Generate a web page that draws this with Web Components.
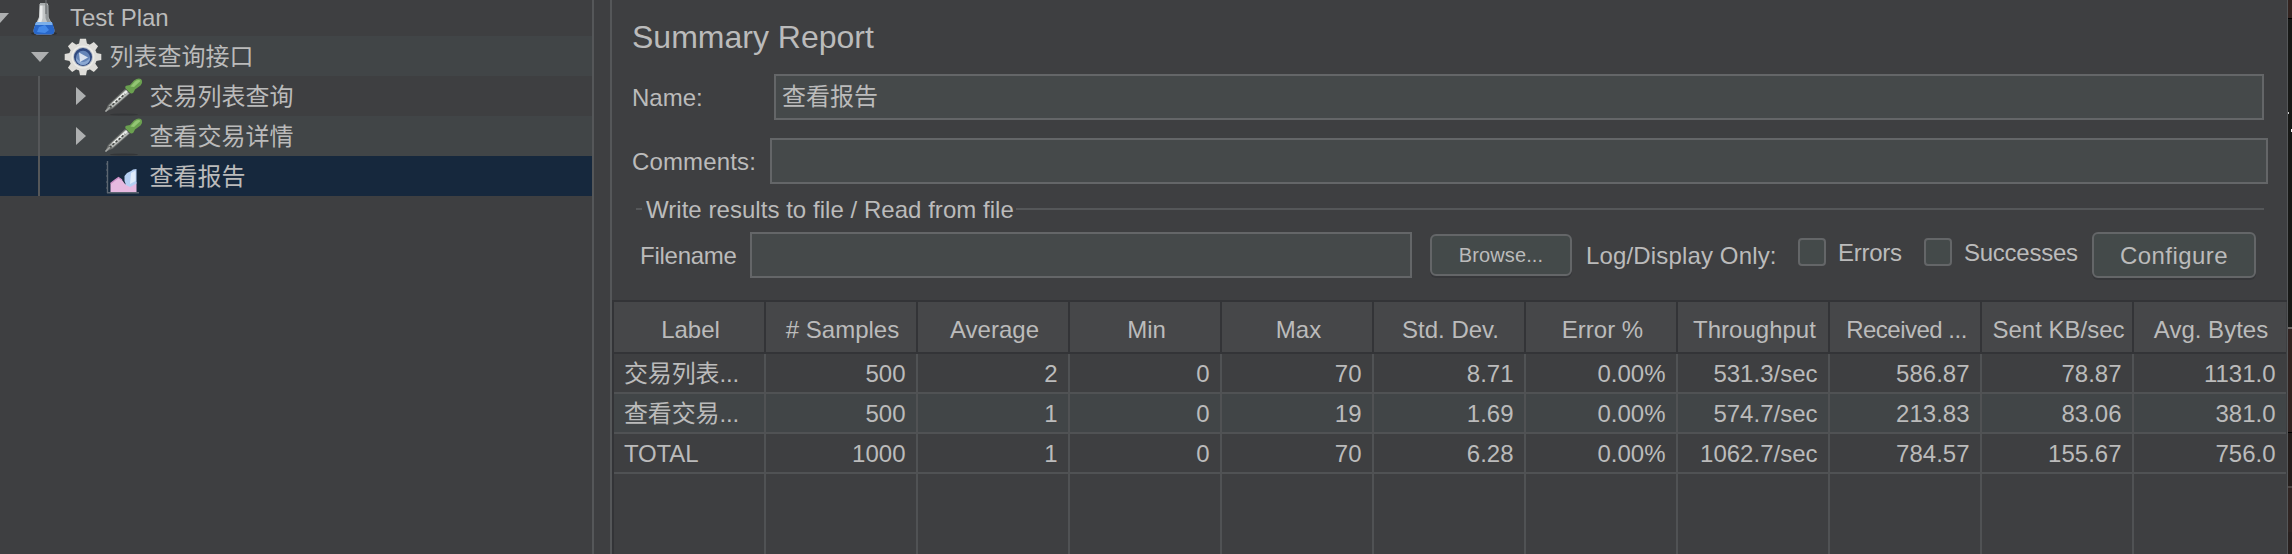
<!DOCTYPE html>
<html lang="zh">
<head>
<meta charset="utf-8">
<title>Summary Report</title>
<style>
body{margin:0;background:#3e3f41;color:#bbb;font:24px/40px "Liberation Sans","Noto Sans CJK SC",sans-serif;overflow:hidden}
</style>
</head>
<body>
<app-window>
  <tree-panel slot="tree">
    <tree-row level="0" icon="flask" state="open">Test Plan</tree-row>
    <tree-row level="1" icon="gear" state="open">列表查询接口</tree-row>
    <tree-row level="2" icon="pipette" state="closed">交易列表查询</tree-row>
    <tree-row level="2" icon="pipette" state="closed">查看交易详情</tree-row>
    <tree-row level="2" icon="chart" state="leaf" selected>查看报告</tree-row>
  </tree-panel>
  <report-panel></report-panel>
</app-window>
<script>
const define = (name, html) => customElements.define(name, class extends HTMLElement {
  connectedCallback() {
    if (this.shadowRoot) return;
    const t = document.createElement('template');
    t.innerHTML = typeof html === 'function' ? html(this) : html;
    this.attachShadow({mode: 'open'}).append(t.content.cloneNode(true));
  }
});

const icons = {
  flask: `<svg width="32" height="36" viewBox="0 0 32 36"><ellipse cx="16" cy="33.500" rx="13" ry="1.800" fill="#2b2d30"/><path d="M11.500 4L11 17 6 28Q4.500 34 9 34.500H23Q27.500 34 26 28L20.500 17 20 4Z" fill="#c2c5c6"/><path d="M12 5L11.500 18 8 27H12L14.500 18V5Z" fill="#e8eaea"/><path d="M17.500 5V18L21 27H25L20.500 18V5Z" fill="#93989a"/><path d="M7.500 23H24.500L26.500 30Q26.500 34.500 23 34.500H9Q5 34 5.500 30Z" fill="#2867ca"/><path d="M8 22H24L24.500 25H7Z" fill="#7db0ea"/><path d="M11 27L17 25 21 30 17 33 9 32Z" fill="#4489e8"/><rect x="12" y="3" width="7.500" height="2.500" fill="#a9adae"/><path d="M18 0V14" stroke="#6d7072" stroke-width="1.200"/></svg>`,
  gear: `<svg width="38" height="38" viewBox="-19 -19 38 38"><g fill="#deddd9">${[0,45,90,135,180,225,270,315].map(a=>`<path transform="rotate(${a})" d="M-4.200 -12L-3 -18.300H3L4.200 -12Z"/>`).join('')}<circle r="14"/></g><circle r="11.500" fill="#ecebe7"/><circle r="10" fill="#b9bfc9"/><circle r="9" fill="#30497f"/><circle cy="1" r="7.200" fill="#6585b8"/><path d="M-7 1A7 7 0 0 0 7 1Q3 5 0 5T-7 1Z" fill="#8ba8d2"/><path d="M-4 -4.500L5 .5 -3 5Z" fill="#d9e2ef"/></svg>`,
  pipette: `<svg width="40" height="40" viewBox="0 0 40 40"><ellipse cx="20" cy="38.500" rx="14" ry="1" fill="#343638"/><path d="M1 36L4 29 21 13 26 17.500 9 32.500Z" fill="#6d706e"/><path d="M5 29.500L21.500 14 25 17.500 8.500 31.500Z" fill="#b9bcb9"/><path d="M9 27.500L23 15" stroke="#eceeeb" stroke-width="2"/><path d="M5.500 31.500L21 18" stroke="#424542" stroke-width="1.500" stroke-dasharray="2.500 1.500"/><path d="M1.500 35.500L6 31" stroke="#a5a7a5" stroke-width="1.600"/><path d="M21.500 12.500Q20.500 9.500 23.500 9.500L26 9 30 4.500Q34 1.500 37 3 39.500 6 36.500 9.500L31 13.500 29.500 16.500Q27.500 18.500 25.500 16.500Z" fill="#6aa04f"/><path d="M26.500 10.500L31 5.500Q35 3 36.500 5L30 11Z" fill="#93c574"/></svg>`,
  chart: `<svg width="40" height="40" viewBox="0 0 40 40"><path d="M3.500 5V37M3 36.700H35" fill="none" stroke="#5c6671" stroke-width="1.400"/><path d="M2 8H4M2 14H4M2 20H4M2 26H4M2 32H4" stroke="#5c6671"/><path d="M6.500 36V27.500L11 24 14.500 21.500 18 24 21 28 26 30 32.500 26V36Z" fill="#e6b9e0"/><path d="M6.500 27.500L11 24 14.500 21.500 18 24" fill="none" stroke="#ca8ec4" stroke-width="1.400"/><path d="M20.500 20L23 17 27 15 29 13.500 32.500 13V27.500L29 29.500 26 31 22 29 20.500 25Z" fill="#b5cff3"/><path d="M27 17L31.500 14.500V25L26 28Z" fill="#dfebfa"/></svg>`
};

define('app-window', `<style>
:host{display:grid;grid-template-columns:592px 2px 16px 2px 1675px 1px 4px;height:554px;background:#3e3f41}
.bar{background:#555759}
.edge{background:linear-gradient(#ccc,#ccc) 0 112px/1px 2px no-repeat,linear-gradient(#eee,#eee) 3px 129px/1px 3px no-repeat,linear-gradient(#33231f 0 18px,#000 18px 19px,#181917 19px 327px,#6a6664 327px 329px,#302321 329px 432px,#000 432px 433px,#241d1b 433px 486px,#4a4341 486px 488px,#302523 488px 532px,#292120 532px)}
</style><slot name="tree"></slot><div class="bar"></div><div></div><div class="bar"></div><slot></slot><div class="bar"></div><div class="edge"></div>`);

define('tree-panel', `<style>:host{display:block;height:554px;overflow:hidden}</style><slot></slot>`);

define('tree-row', e => {
  const s = e.getAttribute('state'), l = +e.getAttribute('level');
  const arrow = s === 'open' ? '<svg width="18" height="10"><path d="M0 0H18L9 10Z" fill="#adafb0"/></svg>'
    : s === 'closed' ? '<svg width="10" height="18"><path d="M0 0V18L10 9Z" fill="#adafb0"/></svg>' : '';
  const indent = [0, 31, 72][l], lead = [70, 109.5, 149.5][l];
  return `<style>
:host{display:grid;grid-template-columns:${lead}px 1fr;height:40px;align-items:center;background:#3e3f41;white-space:nowrap}
:host(:nth-child(1)){height:36px}
:host(:nth-child(even)){background:#414547}
:host([selected]){background:#16283d}
.lead{display:grid;grid-template-columns:${indent}px ${l ? 18 : 9}px 1fr;height:100%;align-items:center;${l === 2 ? 'background:linear-gradient(#555759,#555759) 38px 0/2px 100% no-repeat' : ''}}
.arrow{display:flex;justify-content:${s === 'closed' ? 'center' : 'flex-end'};${l === 1 ? 'padding-top:2px' : ''}}
.arrow svg{flex:none}
.icon{display:flex;width:40px;height:100%;align-items:center;justify-content:center;justify-self:end;margin-right:${[6.5, 6.5, 6][l]}px;${l === 1 ? 'padding-top:2px;box-sizing:border-box' : ''}}
.icon svg{flex:none}
.label{line-height:36px;${l ? 'padding-top:2px' : ''}}
</style><div class="lead"><span></span><span class="arrow">${arrow}</span><span class="icon">${icons[e.getAttribute('icon')]}</span></div><span class="label"><slot></slot></span>`;
});

define('text-field', `<style>:host{display:block;box-sizing:border-box;height:46px;border:2px solid #646668;background:#45494a;padding:0 6px;line-height:42px}</style><slot></slot>`);
define('push-button', `<style>:host{display:flex;box-sizing:border-box;height:46px;border:2px solid #646668;border-radius:6px;background:#444a4a;align-items:center;justify-content:center;box-shadow:0 2px 0 #36373a;letter-spacing:.45px;padding-top:2px}:host([small]){height:42px;font-size:20px;letter-spacing:.1px;padding-top:0}</style><slot></slot>`);
define('check-box', `<style>:host{display:flex;height:28px;line-height:32px;white-space:nowrap;letter-spacing:-.25px}i{box-sizing:border-box;width:28px;height:28px;border:2px solid #646668;border-radius:4px;background:#444a4a;margin-right:12px}</style><i></i><slot></slot>`);

define('report-panel', `<style>
:host{display:flex;flex-direction:column;height:554px;overflow:hidden}
h1{margin:0;font:32px/40px "Liberation Sans",sans-serif;padding:17px 0 0 20px;height:57px}
.row{display:grid;height:46px;line-height:48px}
.name{grid-template-columns:142px 1490px;padding-left:20px}
.comments{grid-template-columns:138px 1498px;padding-left:20px;margin-top:18px}
.comments span{letter-spacing:.15px}
.legend{display:flex;align-items:center;height:50px;padding-left:24px;white-space:nowrap}
.legend i{height:2px;width:6px;background:#555759}
.legend span{width:366px;padding:1px 0 0 4px;line-height:49px;letter-spacing:.04px}
.legend i:last-child{width:1248px;margin-left:4px}
.file{display:grid;grid-template-columns:110px 662px 18px 142px 14px 212px 126px 168px 164px;padding-left:28px;height:46px;line-height:48px;align-items:start;margin-top:-2px;white-space:nowrap}
.file push-button[small]{margin-top:2px}
.file check-box{margin-top:6px;line-height:30px}
.filename{letter-spacing:-.25px}
.log{letter-spacing:.15px}
</style>
<h1>Summary Report</h1>
<div class="row name"><span>Name:</span><text-field>查看报告</text-field></div>
<div class="row comments"><span>Comments:</span><text-field></text-field></div>
<div class="legend"><i></i><span>Write results to file / Read from file</span><i></i></div>
<div class="file"><span class="filename">Filename</span><text-field></text-field><b></b><push-button small>Browse...</push-button><b></b><span class="log">Log/Display Only:</span><check-box>Errors</check-box><check-box>Successes</check-box><push-button>Configure</push-button></div>
<data-table></data-table>`);

const cols = ['Label','# Samples','Average','Min','Max','Std. Dev.','Error %','Throughput','Received ...','Sent KB/sec','Avg. Bytes'];
const rows = [
  ['交易列表...','500','2','0','70','8.71','0.00%','531.3/sec','586.87','78.87','1131.0'],
  ['查看交易...','500','1','0','19','1.69','0.00%','574.7/sec','213.83','83.06','381.0'],
  ['TOTAL','1000','1','0','70','6.28','0.00%','1062.7/sec','784.57','155.67','756.0']
];
const cells = a => a.map(c => `<span>${c}</span>`).join('');
define('data-table', `<style>
:host{display:block;margin-top:22px;border-top:2px solid #333437;border-left:2px solid #333437;height:252px;width:1673px;overflow:hidden}
.r{display:grid;grid-template-columns:repeat(11,152px);width:1672px;height:40px;line-height:40px}
.r span{box-sizing:border-box;height:40px;border-right:2px solid #505254;border-bottom:2px solid #505254;padding:0 10.5px 0 0;text-align:right;white-space:nowrap}
.r span:first-child{text-align:left;padding:0 0 0 10px;letter-spacing:-.15px}
.r span:last-child{border-right:0;padding-right:10.5px}
.r.head{height:52px;line-height:56px;background:#464749}
.r.head span{height:52px;text-align:center;padding:0 0 0 3px;border-color:#333437;letter-spacing:0}
.r.head span:nth-child(9){letter-spacing:-.5px}
.r.head span:last-child{padding-left:2px}
.r.alt{background:#414547}
.r.rest{height:80px}
.r.rest span{height:80px;border-bottom:0}
</style>
<div class="r head">${cells(cols)}</div>
${rows.map((r, i) => `<div class="r${i === 1 ? ' alt' : ''}">${cells(r)}</div>`).join('')}
<div class="r rest">${cells(cols.map(() => ''))}</div>`);
</script>
</body>
</html>
